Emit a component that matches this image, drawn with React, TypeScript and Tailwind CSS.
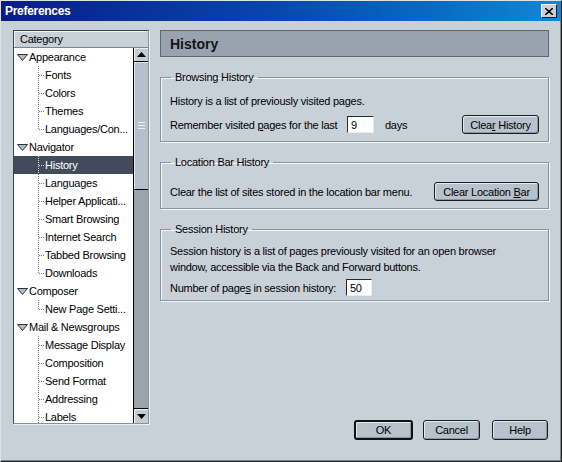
import React from 'react';

type Group = { label: string; children: string[]; more?: boolean };

const tree: Group[] = [
  { label: 'Appearance', children: ['Fonts', 'Colors', 'Themes', 'Languages/Con...'] },
  {
    label: 'Navigator',
    children: ['History', 'Languages', 'Helper Applicati...', 'Smart Browsing', 'Internet Search', 'Tabbed Browsing', 'Downloads'],
  },
  { label: 'Composer', children: ['New Page Setti...'] },
  { label: 'Mail & Newsgroups', children: ['Message Display', 'Composition', 'Send Format', 'Addressing', 'Labels'], more: true },
];

function Twisty() {
  return (
    <svg width="11" height="7" viewBox="0 0 11 7" className="shrink-0">
      <polygon points="0.5,0.5 10.5,0.5 5.5,6.5" fill="#b4bcc6" stroke="#2c333b" strokeWidth="1" />
    </svg>
  );
}

function Connector({ last, light }: { last: boolean; light: boolean }) {
  const c = light ? '#d8dce0' : '#7a7a7a';
  return (
    <svg width="7" height="18" viewBox="0 0 7 18" className="shrink-0">
      <line x1="0.5" y1="0" x2="0.5" y2={last ? 9 : 18} stroke={c} strokeDasharray="1 1" />
      <line x1="1" y1="9.5" x2="7" y2="9.5" stroke={c} strokeDasharray="1 1" />
    </svg>
  );
}

function Button({ children, className = '', isDefault = false }: { children: React.ReactNode; className?: string; isDefault?: boolean }) {
  return (
    <button
      className={`flex items-center justify-center whitespace-nowrap rounded-[3px] bg-[#b8c2cc] text-black shadow-[inset_1px_1px_0_#e6eaee,inset_-1px_-1px_0_#8e97a0] ${
        isDefault ? 'border-2 border-[#111]' : 'border border-[#1c1c1c]'
      } ${className}`}
    >
      {children}
    </button>
  );
}

function Field({ value, className = '' }: { value: string; className?: string }) {
  return (
    <div
      className={`flex items-center bg-white pl-[3px] border border-t-[#2a2a2a] border-l-[#2a2a2a] border-r-[#e8ecf0] border-b-[#e8ecf0] ${className}`}
    >
      {value}
    </div>
  );
}

function Box({ title, children, className = '' }: { title: string; children: React.ReactNode; className?: string }) {
  return (
    <fieldset
      className={`border border-[#8a929b] shadow-[inset_1px_1px_0_#f4f6f8,1px_1px_0_#f4f6f8] pl-[9px] pr-[9px] ${className}`}
    >
      <legend className="ml-[1px] px-[4px] leading-[14px]">{title}</legend>
      {children}
    </fieldset>
  );
}

function ScrollBar() {
  return (
    <div className="flex w-[15px] flex-col border-l border-black bg-[#9ba3ac]">
      <div className="flex h-[13px] items-center justify-center bg-[#c4ccd4] shadow-[inset_1px_1px_0_#eef1f4]">
        <svg width="9" height="5" viewBox="0 0 9 5">
          <polygon points="4.5,0 9,5 0,5" fill="#000" />
        </svg>
      </div>
      <div className="h-px bg-black" />
      <div className="flex h-[128px] flex-col items-center justify-center gap-[2px] border-b border-black bg-[#b6c0ca] shadow-[inset_1px_1px_0_#e2e7ec]">
        <div className="h-px w-[7px] bg-[#eef1f4]" />
        <div className="h-px w-[7px] bg-[#eef1f4]" />
        <div className="h-px w-[7px] bg-[#eef1f4]" />
      </div>
      <div className="flex-1" />
      <div className="h-px bg-black" />
      <div className="flex h-[14px] items-center justify-center bg-[#c4ccd4] shadow-[inset_1px_1px_0_#eef1f4]">
        <svg width="9" height="5" viewBox="0 0 9 5">
          <polygon points="0,0 9,0 4.5,5" fill="#000" />
        </svg>
      </div>
    </div>
  );
}

function CategoryList() {
  return (
    <div className="flex h-[394px] w-[136px] flex-col border border-t-[#3c444c] border-l-[#3c444c] border-r-[#8a929b] border-b-[#8a929b] shadow-[1px_1px_0_#eef1f4]">
      <div className="flex h-[17px] shrink-0 items-center pl-[6px] bg-[#c8d0d8] border-b border-[#7c848c] shadow-[inset_1px_1px_0_#f2f4f6]">
        Category
      </div>
      <div className="flex min-h-0 flex-1">
        <div className="flex-1 overflow-hidden bg-white">
          {tree.map((g) => (
            <div key={g.label}>
              <div className="flex h-[18px] items-center gap-[1px] pl-[3px]">
                <Twisty />
                <span className="whitespace-nowrap">{g.label}</span>
              </div>
              {g.children.map((c, i) => {
                const sel = c === 'History';
                return (
                  <div
                    key={c}
                    className={`flex h-[18px] items-center pl-[24px] ${sel ? 'bg-[#424b5b] text-white' : ''}`}
                  >
                    <Connector last={!g.more && i === g.children.length - 1} light={sel} />
                    <span className="whitespace-nowrap">{c}</span>
                  </div>
                );
              })}
            </div>
          ))}
        </div>
        <ScrollBar />
      </div>
    </div>
  );
}

export default function App() {
  return (
    <div className="flex h-[462px] w-[562px] flex-col border border-t-[#dde2e7] border-l-[#dde2e7] border-r-[#1e1e1e] border-b-[#1e1e1e] bg-[#c8d0d8] text-[11px] leading-[14px] tracking-[-0.25px] text-black shadow-[inset_-1px_-1px_0_#7c848c] font-['Liberation_Sans',Arial,sans-serif]">
      <div className="flex h-[20px] shrink-0 items-center justify-between bg-gradient-to-r from-[#0a1a8a] via-[#0848ae] to-[#1288d4] pl-[4px] pr-[4px]">
        <span className="text-[12px] font-bold tracking-[-0.3px] text-white">Preferences</span>
        <div className="flex h-[14px] w-[16px] items-center justify-center border border-t-[#f0f2f4] border-l-[#f0f2f4] border-r-[#202020] border-b-[#202020] bg-[#c8d0d8]">
          <svg width="8" height="7" viewBox="0 0 8 7">
            <path d="M0 0 L8 7 M8 0 L0 7" stroke="#000" strokeWidth="1.6" />
          </svg>
        </div>
      </div>

      <div className="flex gap-[11px] pl-[12px] pt-[9px]">
        <CategoryList />

        <div className="flex h-[410px] w-[389px] flex-col">
          <div className="flex h-[27px] shrink-0 items-center border border-[#5e6873] bg-[#97a3af] pl-[9px] text-[14px] font-bold tracking-normal text-[#141414]">
            History
          </div>

          <Box title="Browsing History" className="mt-[13px] pb-[7px]">
            <div className="mt-[10px] h-[14px]">History is a list of previously visited pages.</div>
            <div className="mt-[7px] flex h-[19px] items-center">
              <span className="w-[177px] whitespace-nowrap">
                Remember visited <u>p</u>ages for the last
              </span>
              <Field value="9" className="h-[17px] w-[27px]" />
              <span className="ml-[11px]">days</span>
              <Button className="ml-auto h-[19px] w-[77px]">
                Clea<u>r</u>&nbsp;History
              </Button>
            </div>
          </Box>

          <Box title="Location Bar History" className="mt-[13px] pb-[7px]">
            <div className="mt-[13px] flex h-[19px] items-center">
              <span className="whitespace-nowrap">Clear the list of sites stored in the location bar menu.</span>
              <Button className="ml-auto h-[19px] w-[105px]">
                Clear Location&nbsp;<u>B</u>ar
              </Button>
            </div>
          </Box>

          <Box title="Session History" className="mt-[13px] pb-[4px]">
            <div className="mt-[7px] whitespace-nowrap leading-[16px]">
              Session history is a list of pages previously visited for an open browser
              <br />
              window, accessible via the Back and Forward buttons.
            </div>
            <div className="mt-[4px] flex h-[17px] items-center">
              <span className="w-[176px] whitespace-nowrap">
                Number of page<u>s</u> in session history:
              </span>
              <Field value="50" className="h-[17px] w-[26px]" />
            </div>
          </Box>

          <div className="mt-auto flex items-center justify-end pr-[1px]">
            <Button isDefault className="h-[20px] w-[59px]">
              OK
            </Button>
            <Button className="ml-[10px] h-[20px] w-[57px]">Cancel</Button>
            <Button className="ml-[12px] h-[20px] w-[56px]">Help</Button>
          </div>
        </div>
      </div>
    </div>
  );
}
